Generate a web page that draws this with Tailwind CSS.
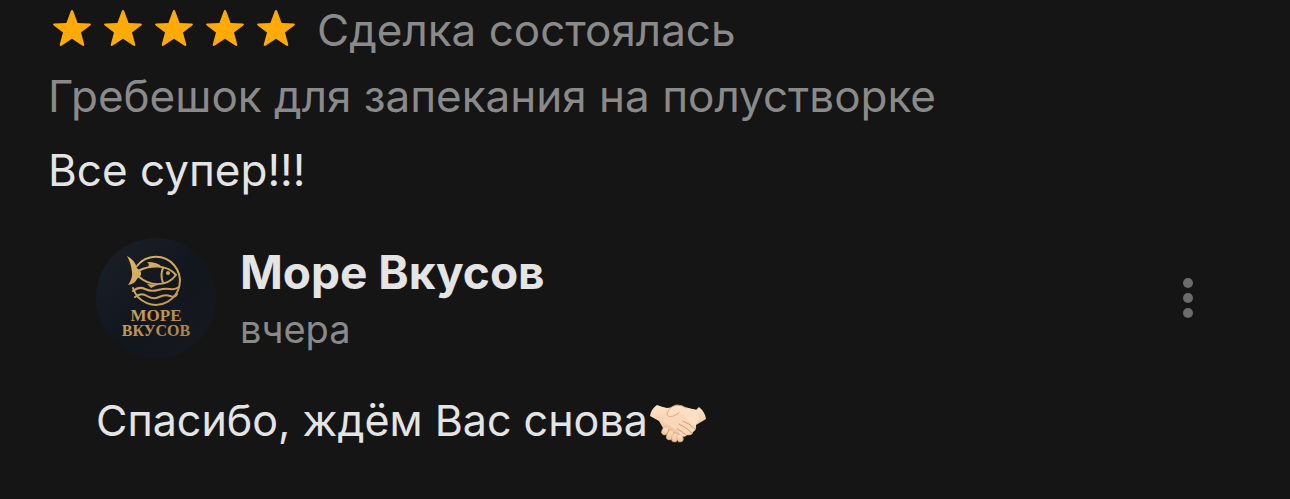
<!DOCTYPE html>
<html lang="ru">
<head>
  <meta charset="UTF-8" />
  <meta name="viewport" content="width=device-width, initial-scale=1.0"/>
  <title>Отзыв</title>
  <script src="https://cdn.jsdelivr.net/npm/@tailwindcss/browser@4"></script>
</head>
<body class="bg-[#151515] min-h-screen font-['Inter','Noto_Sans',sans-serif] text-[44px] leading-[60px] text-[#e4e4e4]">
  <svg class="hidden">
    <symbol id="star" viewBox="0 0 38 38">
      <path d="M19 1 Q19.8 1 20.3 2.3 L24.6 14 L36.6 14.4 Q39 14.7 37.2 16.4 L28 23.6 L31.2 35.2 Q31.5 37.8 29.2 36.5 L19 29.8 L8.8 36.5 Q6.5 37.8 6.8 35.2 L10 23.6 L.8 16.4 Q-1 14.7 1.4 14.4 L13.4 14 L17.7 2.3 Q18.2 1 19 1Z"/>
    </symbol>
  </svg>

  <article class="px-12">
    <div class="flex items-center">
      <div class="flex gap-[13px] pl-[5px] pb-1 text-[#ffaa05]" role="img" aria-label="Оценка 5 из 5">
        <svg class="size-[38px]" fill="currentColor"><use href="#star"/></svg>
        <svg class="size-[38px]" fill="currentColor"><use href="#star"/></svg>
        <svg class="size-[38px]" fill="currentColor"><use href="#star"/></svg>
        <svg class="size-[38px]" fill="currentColor"><use href="#star"/></svg>
        <svg class="size-[38px]" fill="currentColor"><use href="#star"/></svg>
      </div>
      <span class="ml-[22px] text-[#8a8a8a]">Сделка состоялась</span>
    </div>
    <p class="mt-1.5 text-[#8a8a8a]">Гребешок для запекания на полустворке</p>
    <p class="mt-3.5">Все супер!!!</p>

    <section class="mt-[38px] pl-12 pr-10">
      <header class="flex items-center">
        <svg class="size-[120px] shrink-0" viewBox="0 0 120 120" role="img" aria-label="Море Вкусов">
          <defs>
            <linearGradient id="gold" x1="30" y1="18" x2="88" y2="98" gradientUnits="userSpaceOnUse">
              <stop offset="0" stop-color="#dcb667"/>
              <stop offset=".5" stop-color="#c9a057"/>
              <stop offset="1" stop-color="#a8834a"/>
            </linearGradient>
            <linearGradient id="navy" x1="0" y1="0" x2="1" y2="1">
              <stop offset="0" stop-color="#1c2028"/>
              <stop offset=".5" stop-color="#12161d"/>
              <stop offset="1" stop-color="#16191f"/>
            </linearGradient>
          </defs>
          <circle cx="60" cy="60" r="60" fill="url(#navy)"/>
          <g fill="none" stroke="url(#gold)" stroke-width="2" stroke-linecap="round" stroke-linejoin="round">
            <path d="M41 28 A24 24 0 1 1 37 50"/>
            <path d="M42 33 C54 27 71 26 80 37 C71 49 54 49 42 38"/>
            <path d="M67 30 Q64 37 67 45"/>
            <path d="M37 53 Q43 48 49 51 T62 52 T74 51 T83 49"/>
            <path d="M39 59 Q45 54 51 58 T63 59 T74 58 T81 56"/>
          </g>
          <g fill="url(#gold)">
            <path d="M31 18 Q39 22 41 30 L45 34 L45 37 L41 41 Q39 46 32 47 Q37 40 36 34 Q35 25 31 18Z"/>
            <path d="M52 29 Q54 26 51 24 Q62 24 66 29Z"/>
            <path d="M51 46 L61 47 L55 50Z"/>
            <circle cx="72" cy="35" r="2"/>
          </g>
          <g fill="url(#gold)" class="font-['Liberation_Serif',serif] font-bold" text-anchor="middle">
            <text x="60" y="83" class="text-[17px]">МОРЕ</text>
            <text x="60" y="98" class="text-[16px]">ВКУСОВ</text>
          </g>
        </svg>
        <div class="ml-6 grow">
          <h2 class="text-[46px] leading-[62px] font-bold">Море Вкусов</h2>
          <p class="text-[38px] leading-[52px] text-[#8a8a8a]">вчера</p>
        </div>
        <button type="button" aria-label="Ещё" class="p-2">
          <svg class="w-3 h-10" viewBox="0 0 12 40" fill="#6c6c6c">
            <circle cx="6" cy="5" r="5"/>
            <circle cx="6" cy="20" r="5"/>
            <circle cx="6" cy="35" r="5"/>
          </svg>
        </button>
      </header>
      <p class="mt-8 flex items-center text-[43px]">
        Спасибо, ждём Вас снова
        <svg class="w-14 h-10 ml-0.5 mt-2" viewBox="0 0 56 40" role="img" aria-label="Рукопожатие">
          <defs>
            <linearGradient id="skin" x1="0" y1="0" x2="0" y2="1">
              <stop offset="0" stop-color="#ffe4cc"/>
              <stop offset="1" stop-color="#f0bf98"/>
            </linearGradient>
          </defs>
          <g fill="url(#skin)">
            <path d="M7 1 Q12 3 17 4 L31 2 L46 6 L49 3 Q55 8 56 15 L46 21 Q47 26 43 28 Q42 32 37 31 L31 32 L13 24 L9 17 L0 12 Q1 5 7 1Z"/>
            <g stroke="#dda780" stroke-width=".6">
              <rect x="12" y="23" width="6" height="8" rx="3" transform="rotate(25 15 27)"/>
              <rect x="17" y="26" width="6" height="10" rx="3" transform="rotate(22 20 31)"/>
              <rect x="22" y="29" width="6" height="9" rx="3" transform="rotate(15 25 33)"/>
              <rect x="27" y="30" width="6" height="8" rx="3" transform="rotate(-15 30 34)"/>
            </g>
          </g>
          <path d="M11 17 Q22 21 32 32 Q35 34 37 31 L43 28 L46 21 L35 11 L18 8Z" fill="#fad7b8"/>
          <path d="M17 9 Q20 2 27 1 Q32 1 36 4 L47 6 L49 15 L45 22 Q38 17 34 11 L29 9 L23 12 Q17 14 17 9Z" fill="#ffdfc4"/>
          <path d="M36 4 Q32 1 27 1 Q20 2 17 9 Q17 14 23 12 L29 9" fill="none" stroke="#dca47b" stroke-width=".9" stroke-linecap="round"/>
          <path d="M33 17 Q39 19 45 25 M29 20 Q36 23 42 29 M27 25 Q32 27 36 31" fill="none" stroke="#d79b70" stroke-width="1" stroke-linecap="round"/>
        </svg>
      </p>
    </section>
  </article>
</body>
</html>
